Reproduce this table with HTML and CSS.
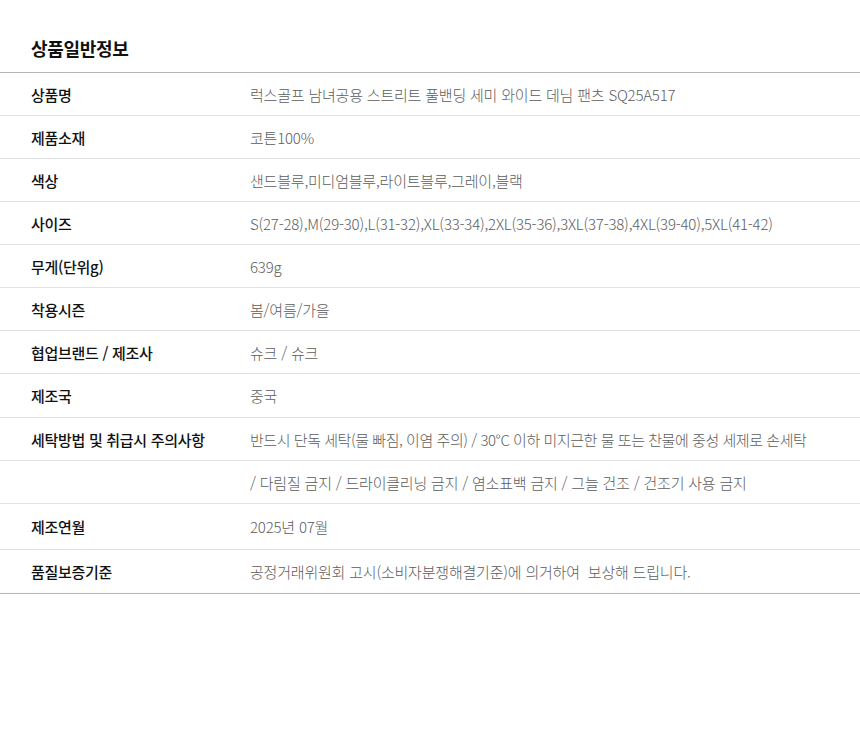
FILE: index.html
```html
<!DOCTYPE html>
<html lang="ko">
<head>
<meta charset="utf-8">
<link rel="stylesheet" href="styles.css">
</head>
<body>
<section class="info">
  <h2 class="title">상품일반정보</h2>
  <div class="table">
    <div class="row"><div class="label">상품명</div><div class="value">럭스골프 남녀공용 스트리트 풀밴딩 세미 와이드 데님 팬츠 SQ25A517</div></div>
    <div class="row"><div class="label">제품소재</div><div class="value">코튼100%</div></div>
    <div class="row"><div class="label">색상</div><div class="value">샌드블루,미디엄블루,라이트블루,그레이,블랙</div></div>
    <div class="row"><div class="label">사이즈</div><div class="value">S(27-28),M(29-30),L(31-32),XL(33-34),2XL(35-36),3XL(37-38),4XL(39-40),5XL(41-42)</div></div>
    <div class="row"><div class="label">무게(단위g)</div><div class="value">639g</div></div>
    <div class="row"><div class="label">착용시즌</div><div class="value">봄/여름/가을</div></div>
    <div class="row"><div class="label">협업브랜드 / 제조사</div><div class="value">슈크 / 슈크</div></div>
    <div class="row plus1"><div class="label">제조국</div><div class="value">중국</div></div>
    <div class="row"><div class="label">세탁방법 및 취급시 주의사항</div><div class="value tight">반드시 단독 세탁(물 빠짐, 이염 주의) / 30°C 이하 미지근한 물 또는 찬물에 중성 세제로 손세탁</div></div>
    <div class="row"><div class="label"></div><div class="value">/ 다림질 금지 / 드라이클리닝 금지 / 염소표백 금지 / 그늘 건조 / 건조기 사용 금지</div></div>
    <div class="row tall"><div class="label">제조연월</div><div class="value">2025년 07월</div></div>
    <div class="row"><div class="label">품질보증기준</div><div class="value">공정거래위원회 고시(소비자분쟁해결기준)에 의거하여&nbsp; 보상해 드립니다.</div></div>
  </div>
</section>
</body>
</html>
```

FILE: styles.css
```css
html, body {
  margin: 0;
  padding: 0;
  background: #fff;
}
body {
  font-family: "Noto Sans CJK KR", "Noto Sans", sans-serif;
  color: #111;
}
.info {
  width: 860px;
}
.title {
  margin: 0;
  height: 73px;
  box-sizing: border-box;
  padding: 34px 0 0 31px;
  font-size: 18px;
  line-height: 28px;
  font-weight: 700;
  color: #111;
  border-bottom: 1px solid #b4b4b4;
  letter-spacing: -0.3px;
}
.table {
  border-bottom: 1px solid #b4b4b4;
}
.row {
  display: flex;
  align-items: center;
  height: 42px;
  border-bottom: 1px solid #e2e2e2;
  font-size: 15px;
  letter-spacing: -0.3px;
}
.row:last-child {
  border-bottom: none;
  height: 43px;
}
.row.plus1 {
  height: 43px;
}
.row.tall {
  height: 45px;
}
.label {
  width: 219px;
  padding-left: 31px;
  font-weight: 500;
  color: #111;
}
.value {
  color: #5c5c5c;
  font-weight: 300;
  letter-spacing: -0.2px;
}
.value.tight {
  letter-spacing: -0.45px;
}
```
